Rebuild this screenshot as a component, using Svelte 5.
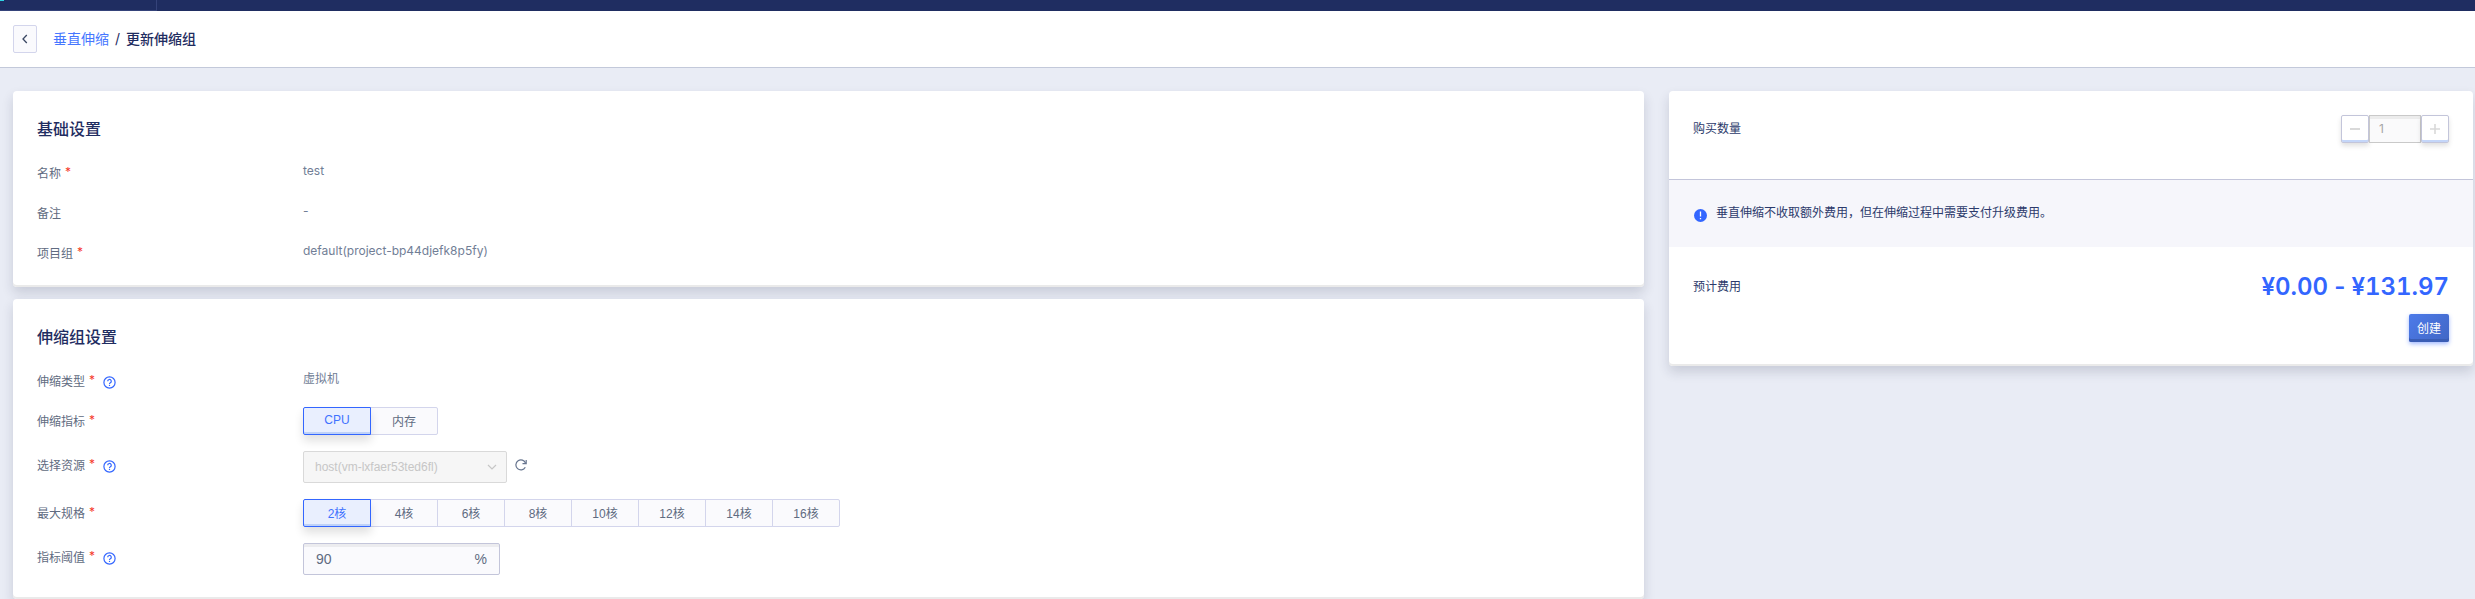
<script>
  const metrics = ['CPU', '内存'];
  const cores = [2, 4, 6, 8, 10, 12, 14, 16];
  let metric = $state('CPU');
  let core = $state(2);
  let threshold = $state('90');
</script>

{#snippet help()}
  <button class="help" type="button" aria-label="help">
    <svg viewBox="0 0 13 13" width="13" height="13" fill="none" stroke="currentColor" stroke-width="1.2">
      <circle cx="6.5" cy="6.5" r="5.6" />
      <path d="M4.7 5.3a1.8 1.8 0 1 1 2.7 1.5c-.7.4-.9.7-.9 1.2" />
      <path d="M6.5 8.8v1.2" />
    </svg>
  </button>
{/snippet}

{#snippet star()}<span class="star">*</span>{/snippet}

<div class="topbar"><div class="brand"><i></i></div></div>

<header>
  <button class="back" type="button" aria-label="back">
    <svg viewBox="0 0 8 10" width="8" height="10" fill="none" stroke="currentColor" stroke-width="1.3">
      <path d="M5.8 1 2 5l3.8 4" />
    </svg>
  </button>
  <nav>
    <a href="#list">垂直伸缩</a><span class="slash">/</span><strong>更新伸缩组</strong>
  </nav>
</header>

<main>
  <div class="left">
    <section class="card form">
      <h2>基础设置</h2>
      <dl>
        <div class="row"><dt>名称{@render star()}</dt><dd>test</dd></div>
        <div class="row"><dt>备注</dt><dd>-</dd></div>
        <div class="row"><dt>项目组{@render star()}</dt><dd>default(project-bp44djefk8p5fy)</dd></div>
      </dl>
    </section>

    <section class="card form">
      <h2>伸缩组设置</h2>
      <div class="row">
        <div class="label">伸缩类型{@render star()}{@render help()}</div>
        <div class="value">虚拟机</div>
      </div>
      <div class="row">
        <div class="label">伸缩指标{@render star()}</div>
        <div class="control">
          <div class="group">
            {#each metrics as m}
              <button type="button" class:on={metric === m} onclick={() => (metric = m)}>{m}</button>
            {/each}
          </div>
        </div>
      </div>
      <div class="row">
        <div class="label"><label for="res">选择资源</label>{@render star()}{@render help()}</div>
        <div class="control">
          <div class="select">
            <select id="res" disabled><option>host(vm-lxfaer53ted6fl)</option></select>
            <svg viewBox="0 0 10 6" width="10" height="6" fill="none" stroke="currentColor" stroke-width="1.2">
              <path d="m1 1 4 4 4-4" />
            </svg>
          </div>
          <button class="refresh" type="button" aria-label="refresh">
            <svg viewBox="0 0 12 12" width="12" height="12" fill="none" stroke="currentColor" stroke-width="1.2">
              <path d="M10.3 8.3A5 5 0 1 1 10.6 4.2" />
              <path d="M11.2 1v3.7H7.5" />
            </svg>
          </button>
        </div>
      </div>
      <div class="row">
        <div class="label">最大规格{@render star()}</div>
        <div class="control">
          <div class="group">
            {#each cores as c}
              <button type="button" class:on={core === c} onclick={() => (core = c)}>{c}核</button>
            {/each}
          </div>
        </div>
      </div>
      <div class="row">
        <div class="label"><label for="limit">指标阈值</label>{@render star()}{@render help()}</div>
        <div class="control">
          <div class="amount"><input id="limit" type="text" bind:value={threshold} /><span>%</span></div>
        </div>
      </div>
    </section>
  </div>

  <aside class="card">
    <div class="buy">
      <label for="qty">购买数量</label>
      <div class="stepper">
        <button type="button" disabled aria-label="minus">
          <svg viewBox="0 0 10 10" width="10" height="10" stroke="currentColor" stroke-width="2"><path d="M0 5h10" /></svg>
        </button>
        <input id="qty" type="text" value="1" disabled />
        <button type="button" disabled aria-label="plus">
          <svg viewBox="0 0 10 10" width="10" height="10" stroke="currentColor" stroke-width="1.6"><path d="M0 5h10M5 0v10" /></svg>
        </button>
      </div>
    </div>
    <div class="notice">
      <svg viewBox="0 0 13 13" width="13" height="13">
        <circle cx="6.5" cy="6.5" r="6.5" fill="#3366ff" />
        <path d="M6.5 2.6v5M6.5 9v1.3" stroke="#fff" stroke-width="1.3" />
      </svg>
      <p>垂直伸缩不收取额外费用，但在伸缩过程中需要支付升级费用。</p>
    </div>
    <div class="cost">
      <div class="total">
        <span>预计费用</span>
        <output><span class="sum">¥0.00</span> - <span class="sum">¥131.97</span></output>
      </div>
      <button class="create" type="button">创建</button>
    </div>
  </aside>
</main>

<style>
  :global(body) {
    background: #e9ecf5;
    font-family: Inter, 'Noto Sans CJK SC', sans-serif;
    font-size: 12px;
    color: #5f6b81;
  }
  * { box-sizing: border-box; }
  button, input, select { font: inherit; color: inherit; margin: 0; padding: 0; }
  button { cursor: pointer; }
  svg { display: block; flex: none; }

  .topbar { height: 11px; background: #1f2d61; }
  .brand { width: 157px; height: 11px; border: solid #35437a; border-width: 0 1px 1px 0; }
  .brand i { display: block; width: 4px; height: 1px; background: #2fd5e5; }

  header {
    display: flex;
    align-items: center;
    gap: 16px;
    height: 57px;
    padding: 0 13px;
    background: #fff;
    border-bottom: 1px solid #c3c9da;
  }
  .back {
    display: flex;
    align-items: center;
    justify-content: center;
    width: 24px;
    height: 28px;
    border: 1px solid #d3d5ec;
    border-radius: 2px;
    background: #fafafd;
    color: #3a4763;
  }
  nav { font-size: 14px; line-height: 20px; color: #1f2d61; }
  nav a { color: #4677ff; text-decoration: none; }
  nav strong { font-weight: 500; }
  .slash { margin: 0 6px; }

  main {
    display: grid;
    grid-template-columns: 1631fr 804fr;
    align-items: start;
    gap: 25px;
    padding: 23px 2px 0 13px;
  }
  .left { display: grid; gap: 12px; }
  .card {
    background: #fff;
    border-radius: 4px;
    box-shadow: inset 0 -2px #eaeaea, 0 6px 12px rgba(31, 38, 70, 0.16);
  }
  .form { padding: 24px 24px 14px; }
  h2 {
    margin: 0 0 10px;
    font-size: 16px;
    line-height: 28px;
    font-weight: 500;
    color: #1f2d61;
  }
  dl { margin: 0; }
  .row { display: grid; grid-template-columns: 266px 1fr; align-items: start; }
  dt, .label { display: flex; align-items: center; height: 40px; padding-bottom: 2px; }
  dd, .value { margin: 0; line-height: 36px; color: #717e96; }
  .star { margin-left: 4px; color: #f5392b; line-height: 16px; }
  .help {
    display: flex;
    margin-left: 8px;
    padding-top: 4px;
    border: 0;
    background: none;
    color: #3366ff;
  }
  .control { display: flex; padding: 6px 0 10px; font-family: 'Liberation Sans', 'Noto Sans CJK SC', sans-serif; }

  .group { display: flex; }
  .group button {
    width: 68px;
    height: 28px;
    margin-right: -1px;
    padding-bottom: 2px;
    border: 1px solid #d3d5ec;
    background: #fafafd;
  }
  .group button:first-child { border-radius: 2px 0 0 2px; }
  .group button:last-child { border-radius: 0 2px 2px 0; }
  .group .on {
    z-index: 1;
    border-color: #3366ff;
    background: #e9effe;
    color: #3f72ff;
    box-shadow: inset 0 -2px #bfd2f8, 0 6px 10px rgba(0, 0, 0, 0.12);
  }

  .select {
    display: flex;
    align-items: center;
    width: 204px;
    height: 32px;
    padding: 0 9px 0 11px;
    border: 1px solid #d9d9d9;
    border-radius: 2px;
    background: #f6f6f6;
    color: #c6c6c6;
  }
  .select select {
    flex: 1;
    min-width: 0;
    border: 0;
    background: none;
    appearance: none;
    opacity: 1;
  }
  .refresh { align-self: center; margin: 0 8px 4px; border: 0; background: none; color: #67758f; }

  .amount {
    display: flex;
    align-items: center;
    width: 197px;
    height: 32px;
    padding: 0 12px;
    border: 1px solid #c3c5da;
    border-radius: 2px;
    background: #fafafd;
    box-shadow: inset 0 3px #ececef;
    font-size: 14px;
  }
  .amount input { flex: 1; min-width: 0; border: 0; background: none; outline: 0; }

  aside { color: #2c3a6b; }
  .buy {
    display: flex;
    justify-content: space-between;
    height: 89px;
    padding: 24px;
    border-bottom: 1px solid #c3c5da;
    line-height: 28px;
  }
  .stepper { display: flex; height: 28px; }
  .stepper button {
    display: flex;
    align-items: center;
    justify-content: center;
    width: 28px;
    border: 1px solid #c3c5da;
    border-radius: 2px;
    background: #fff;
    color: #d9d9d9;
    box-shadow: inset 0 -2px #c4d6f9, 0 3px 5px rgba(0, 0, 0, 0.12);
  }
  .stepper input {
    width: 52px;
    padding: 0 9px;
    border: 1px solid #c9c9c9;
    background: #fafafb;
    color: #a6a6a6;
    box-shadow: inset 0 3px #ececec;
  }
  .notice {
    display: flex;
    gap: 9px;
    padding: 23px 25px 24px;
    background: #f6f6fb;
  }
  .notice svg { margin-top: 6px; }
  .notice p { margin: 0; line-height: 20px; }
  .cost { display: grid; justify-items: end; gap: 8px; padding: 20px 24px 24px; }
  .total {
    display: flex;
    justify-content: space-between;
    width: 100%;
    line-height: 39px;
  }
  .total output { font-size: 24px; font-weight: 600; color: #3366ff; }
  .sum { font-variant-numeric: tabular-nums; }
  .create {
    width: 40px;
    height: 28px;
    padding-bottom: 2px;
    border: 0;
    border-radius: 2px;
    background: linear-gradient(135deg, #4d7bea, #4166c4);
    color: #fff;
    box-shadow: inset 0 -3px #3a5db5, 0 2px 4px rgba(51, 102, 255, 0.45);
  }
</style>
